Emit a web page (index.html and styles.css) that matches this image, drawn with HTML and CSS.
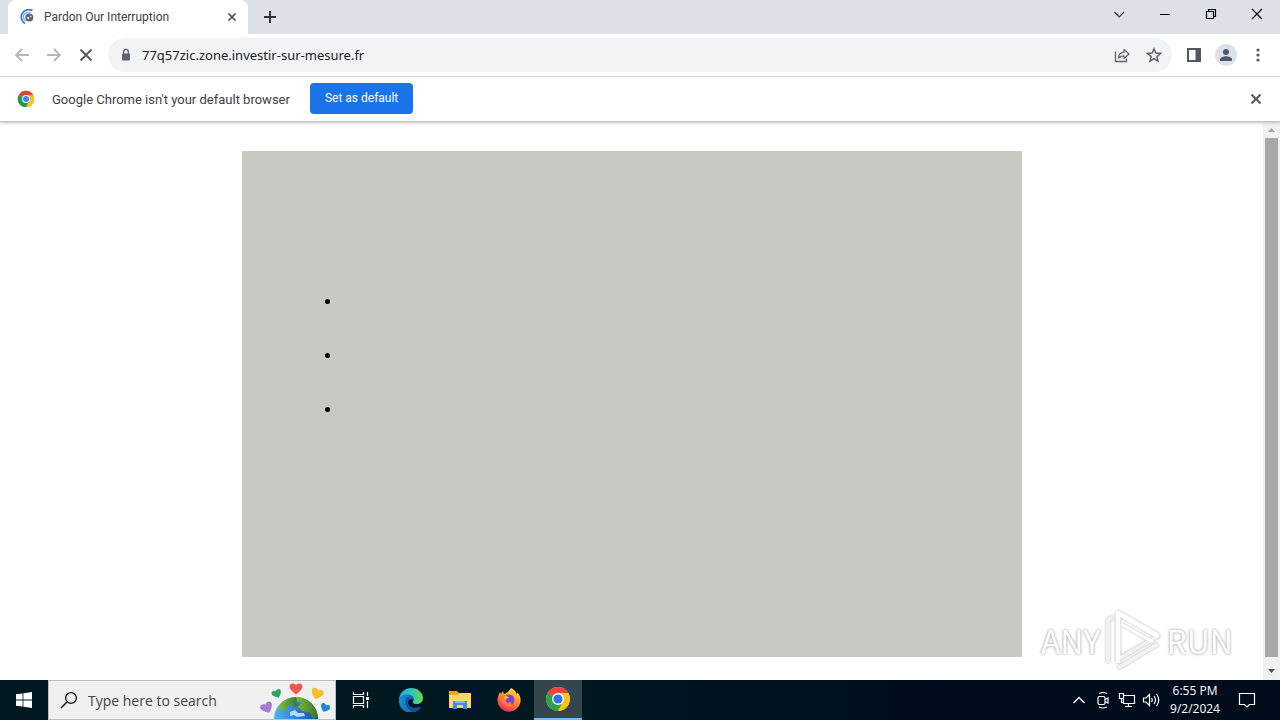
FILE: index.html
```html
<!DOCTYPE html>
<html lang="en">
<head>
	<meta charset="utf-8">
	<title>Pardon Our Interruption</title>
	<link rel="stylesheet" href="styles.css">
</head>
<body>
	<header class="tabstrip">
		<div class="tab">
			<svg width="16" height="16" viewBox="0 0 16 16">
				<path d="M12.500 1.600A7 7 0 1 0 5 14.500" fill="none" stroke="#3b78d8" stroke-width="1.700"/>
				<path d="M10.500 4A4.600 4.600 0 1 0 6 12" fill="none" stroke="#7fa9e6" stroke-width="1.200"/>
				<circle cx="9.300" cy="8.400" r="4" fill="#5f6368"/>
				<path d="M6.500 9l2-1.500 1 1.500-1 1.500zM9.500 6.500l2.500.5-1 1.500z" fill="#dfe3e8"/>
			</svg>
			<span class="tab-title">Pardon Our Interruption</span>
			<button class="icon-btn" aria-label="Close tab">
				<svg width="16" height="16" viewBox="0 0 16 16"><path d="M4.500 4.500l7 7M11.500 4.500l-7 7" stroke="#45494d" stroke-width="1.700"/></svg>
			</button>
		</div>
		<button class="icon-btn new-tab" aria-label="New tab">
			<svg width="16" height="16" viewBox="0 0 16 16"><path d="M8 2v12M2 8h12" stroke="#303438" stroke-width="2"/></svg>
		</button>
		<div class="window-buttons">
			<button class="icon-btn" aria-label="Search tabs">
				<svg width="16" height="16" viewBox="0 0 16 16"><path d="M3.500 6l4.800 5 4.700-5" fill="none" stroke="#333" stroke-width="1.200"/></svg>
			</button>
			<button class="icon-btn" aria-label="Minimize">
				<svg width="16" height="16" viewBox="0 0 16 16"><path d="M3 8.500h10" stroke="#000"/></svg>
			</button>
			<button class="icon-btn" aria-label="Restore">
				<svg width="16" height="16" viewBox="0 0 16 16"><path d="M3.500 5.500h7v7h-7zM5.500 5.500v-2h7v7h-2" fill="none" stroke="#000" stroke-width="1.200"/></svg>
			</button>
			<button class="icon-btn" aria-label="Close">
				<svg width="16" height="16" viewBox="0 0 16 16"><path d="M3 3l10 10M13 3L3 13" stroke="#000" stroke-width="1.200"/></svg>
			</button>
		</div>
	</header>

	<nav class="toolbar">
		<button class="icon-btn" aria-label="Back">
			<svg width="16" height="16" viewBox="0 0 16 16"><path d="M15 8H2.500M8 2L2 8l6 6" fill="none" stroke="#b5b7b9" stroke-width="1.800"/></svg>
		</button>
		<button class="icon-btn" aria-label="Forward">
			<svg width="16" height="16" viewBox="0 0 16 16"><path d="M1 8h12.500M8 2l6 6-6 6" fill="none" stroke="#b5b7b9" stroke-width="1.800"/></svg>
		</button>
		<button class="icon-btn" aria-label="Stop">
			<svg width="16" height="16" viewBox="0 0 16 16"><path d="M2.500 2.500l11 11M13.500 2.500l-11 11" stroke="#55595d" stroke-width="1.800"/></svg>
		</button>
		<div class="omnibox">
			<svg width="16" height="16" viewBox="0 0 16 16"><rect x="4" y="6.500" width="8" height="7" rx="1" fill="#5f6368"/><path d="M5.700 7V4.700a2.300 2.300 0 0 1 4.600 0V7" fill="none" stroke="#5f6368" stroke-width="1.400"/></svg>
			<input class="url" type="text" aria-label="Address" value="77q57zic.zone.investir-sur-mesure.fr">
			<button class="icon-btn" aria-label="Share">
				<svg width="16" height="16" viewBox="0 0 16 16"><path d="M1.500 4.500v10h11v-3" fill="none" stroke="#5f6368" stroke-width="1.300"/><path d="M4.500 11c.3-3.500 2-5.500 5.500-5.800V2.500L15 7l-5 4.500V8.800C7.500 8.800 6 9.500 4.500 11z" fill="none" stroke="#5f6368" stroke-width="1.200" stroke-linejoin="round"/></svg>
			</button>
			<button class="icon-btn" aria-label="Bookmark this tab">
				<svg width="16" height="16" viewBox="0 0 16 16"><path d="M8 1.800l1.800 4.300 4.700.4-3.600 3.100 1.100 4.600L8 11.700l-4 2.500 1.100-4.600-3.600-3.100 4.700-.4z" fill="none" stroke="#5f6368" stroke-width="1.500"/></svg>
			</button>
		</div>
		<div class="toolbar-end">
			<button class="icon-btn" aria-label="Side panel">
				<svg width="16" height="16" viewBox="0 0 16 16"><path d="M2 2h12v12H2z" fill="none" stroke="#55595d" stroke-width="2"/><path d="M9.500 2H14v12H9.500z" fill="#55595d"/></svg>
			</button>
			<button class="icon-btn" aria-label="Profile">
				<svg width="22" height="22" viewBox="0 0 22 22"><circle cx="11" cy="11" r="11" fill="#dee1e8"/><circle cx="11" cy="8" r="3" fill="#4f5870"/><path d="M5 17v-1.700c0-2 4-3 6-3s6 1 6 3V17z" fill="#4f5870"/></svg>
			</button>
			<button class="icon-btn" aria-label="Menu">
				<svg width="16" height="16" viewBox="0 0 16 16" fill="#55595d"><circle cx="8" cy="3" r="1.600"/><circle cx="8" cy="8" r="1.600"/><circle cx="8" cy="13" r="1.600"/></svg>
			</button>
		</div>
	</nav>

	<div class="infobar">
		<svg width="18" height="18" viewBox="0 0 48 48">
			<circle cx="24" cy="24" r="22" fill="#fbc116"/>
			<path d="M24 24L4.900 13A22 22 0 0 1 43.100 13z" fill="#db4437"/>
			<path d="M24 24L4.900 13A22 22 0 0 0 24 46l9.500-16.500z" fill="#1e9b57"/>
			<path d="M24 14h19.600A22 22 0 0 1 24 46l9-17z" fill="#fbc116"/>
			<circle cx="24" cy="24" r="10.500" fill="#fff"/><circle cx="24" cy="24" r="8" fill="#4285f4"/>
		</svg>
		<span class="infobar-text">Google Chrome isn't your default browser</span>
		<button class="default-btn">Set as default</button>
		<button class="icon-btn infobar-close" aria-label="Dismiss">
			<svg width="16" height="16" viewBox="0 0 16 16"><path d="M3.500 3.500l9 9M12.500 3.500l-9 9" stroke="#55595d" stroke-width="2"/></svg>
		</button>
	</div>

	<div class="viewport">
		<main class="page">
			<div class="panel">
				<ul class="list">
					<li></li>
					<li></li>
					<li></li>
				</ul>
			</div>
		</main>
		<div class="scrollbar">
			<svg width="17" height="16" viewBox="0 0 17 16"><path d="M5 10l3.500-4 3.500 4z" fill="#a3a3a3"/></svg>
			<div class="thumb"></div>
			<svg width="17" height="23" viewBox="0 0 17 23"><path d="M5 12l3.500 4 3.500-4z" fill="#505050"/></svg>
		</div>
		<div class="watermark">
			<span>ANY</span>
			<svg class="play" width="58" height="64" viewBox="0 0 58 64" fill="none" stroke-linejoin="round">
				<path d="M14 5l40 23-38 22" stroke="#f0f0f0" stroke-width="4"/>
				<path d="M9 9L4 12v43M14 60l40-24" stroke="#f2f2f2" stroke-width="4"/>
				<path d="M14 55V5l40 23" stroke="#fff" stroke-width="5"/>
				<path d="M17 16l32 18" stroke="#fff" stroke-width="3"/>
			</svg>
			<span>RUN</span>
		</div>
	</div>

	<footer class="taskbar">
		<button class="task" aria-label="Start">
			<svg width="16" height="16" viewBox="0 0 16 16" fill="#fff"><path d="M0 2.300l6.600-.9v6.200H0zM7.400 1.300L16 0v7.600H7.400zM0 8.400h6.600v6.200L0 13.700zM7.400 8.400H16V16l-8.600-1.200z"/></svg>
		</button>
		<div class="search">
			<svg width="18" height="18" viewBox="0 0 18 18"><circle cx="11" cy="7" r="5.400" fill="none" stroke="#111" stroke-width="1.300"/><path d="M7 11l-6 6" stroke="#111" stroke-width="1.400"/></svg>
			<input class="search-input" type="text" aria-label="Search" placeholder="Type here to search">
			<svg width="70" height="38" viewBox="0 0 70 38">
				<defs>
					<linearGradient id="sea" x1="0" x2="1"><stop offset="0" stop-color="#4fb4f8"/><stop offset="1" stop-color="#164ba0"/></linearGradient>
					<linearGradient id="land" x1="0" x2="1"><stop offset="0" stop-color="#83bd37"/><stop offset="1" stop-color="#32752b"/></linearGradient>
					<clipPath id="ball"><circle cx="36" cy="38" r="22"/></clipPath>
					<path id="heart" d="M0 5.500C-4 2.500-6.500 0-6.500-2.500-6.500-6-2-6.500 0-4 2-6.500 6.500-6 6.500-2.500 6.500 0 4 2.500 0 5.500z"/>
				</defs>
				<circle cx="36" cy="38" r="22" fill="url(#sea)"/>
				<g clip-path="url(#ball)" fill="url(#land)">
					<path d="M19 25c4-6 10-9 17-9l3 3-4 2 3 4-4 1-4-3-3 3-2 4-5-1z"/>
					<path d="M36 16c12 0 21 8 22 19l-5 3-3-6-8-2-4-4 3-4-4-2z"/>
				</g>
				<path d="M30 31l5-2 3 3 6 0 1 3-8 1-3-2-4 1z" fill="#a9def5"/>
				<use href="#heart" transform="translate(36 8)" fill="#ed5950"/>
				<use href="#heart" transform="translate(17 13) rotate(-25) scale(.75)" fill="#26a75a"/>
				<use href="#heart" transform="translate(57 13) rotate(20) scale(.95)" fill="#f8bd27"/>
				<use href="#heart" transform="translate(7 27) rotate(-25) scale(.95)" fill="#a87bd0"/>
				<use href="#heart" transform="translate(65 27) rotate(25) scale(.75)" fill="#238bd3"/>
			</svg>
		</div>
		<div class="pinned">
			<button class="task task-view" aria-label="Task view">
				<svg width="18" height="18" viewBox="0 0 18 18" fill="none" stroke="#fff" stroke-width="1.200"><path d="M1.500 5.500h10v7h-10zM1.500 1v2.500h10V1M1.500 17v-2.500h10V17M15.500 1v4M15.500 10v7"/><path d="M14 6h3v3h-3z" fill="#fff" stroke="none"/></svg>
			</button>
			<button class="task" aria-label="Microsoft Edge">
				<svg width="24" height="24" viewBox="0 0 24 24">
					<defs>
						<linearGradient id="edgeTop" x1="0" x2="1"><stop offset="0" stop-color="#27a7e5"/><stop offset=".5" stop-color="#2fc6bd"/><stop offset="1" stop-color="#66d94b"/></linearGradient>
						<linearGradient id="edgeLow" x1="0" x2="1"><stop offset="0" stop-color="#168fd9"/><stop offset="1" stop-color="#115097"/></linearGradient>
					</defs>
					<path d="M0 12A12 12 0 0 1 12 0c7 0 12 5 12 10 0 4-3 6-6.500 6-3 0-4.500-1-3.500-2.500C16 10.500 13 7 8.500 7 4 7 1 9.500 0 12z" fill="url(#edgeTop)"/>
					<path d="M0 12C1 8.500 4.500 6.500 8.500 6.500c4.500 0 7 3 6 6-1-2-5-2-6 1-1 4 5 8 12 5.500l1.500.5A12 12 0 0 1 0 12z" fill="url(#edgeLow)"/>
					<path d="M8.500 9C5 12 6 20 13 23.900c4 .3 7-1.900 9-4.900-5 2.500-11 1-12.500-3-1-3 1-4.500 2.500-5z" fill="#134f97"/>
				</svg>
			</button>
			<button class="task" aria-label="File Explorer">
				<svg width="22" height="20" viewBox="0 0 22 20"><path d="M0 1h8l2 2h12v15H0z" fill="#e9a52c"/><path d="M0 5h9l2-2h11v15H0z" fill="#ffd667"/><path d="M4 11h14v8h-4v-4H8v4H4z" fill="#3592d5"/><path d="M6 11h10v2H6z" fill="#74c1ee"/></svg>
			</button>
			<button class="task" aria-label="Firefox">
				<svg width="24" height="24" viewBox="0 0 24 24">
					<defs><linearGradient id="fox" x1=".8" y1="0" x2=".3" y2="1"><stop offset="0" stop-color="#ffe63b"/><stop offset=".45" stop-color="#ff922e"/><stop offset="1" stop-color="#f42263"/></linearGradient></defs>
					<path d="M14 0c4 2 5 4 5.500 6l1-1.500C23 7 24 10 23.500 14A11.600 11.600 0 0 1 .5 13C.3 9 2 6 3 4l1 2 2-3 1 3c3-1 5-3 7-6z" fill="url(#fox)"/>
					<circle cx="12" cy="12" r="5.500" fill="#7846d3"/><path d="M4 8c3-1 5 0 8 1l-3 2c-1 3 2 5 5 3l1 4c-5 2-10-1-11-6z" fill="#ff7a32"/><path d="M8 8l4 1-3 2-2 1z" fill="#ffc13c"/>
				</svg>
			</button>
			<button class="task active" aria-label="Google Chrome">
				<svg width="26" height="26" viewBox="0 0 48 48">
					<circle cx="24" cy="24" r="22" fill="#fbc116"/>
					<path d="M24 24L4.900 13A22 22 0 0 1 43.100 13z" fill="#e84536"/>
					<path d="M24 24L4.900 13A22 22 0 0 0 24 46l9.500-16.500z" fill="#2aa34a"/>
					<path d="M24 13h19.100A22 22 0 0 1 24 46l9-17z" fill="#fbc116"/>
					<circle cx="24" cy="24" r="11" fill="#fff"/><circle cx="24" cy="24" r="8.500" fill="#2f75e8"/>
				</svg>
			</button>
		</div>
		<div class="tray">
			<svg width="18" height="18" viewBox="0 0 18 18"><path d="M3.500 12L9 6.500l5.500 5.500" fill="none" stroke="#fff" stroke-width="1.300"/></svg>
			<svg width="18" height="18" viewBox="0 0 18 18" fill="none" stroke="#fff" stroke-width="1.200"><rect x="4" y="5.500" width="7" height="8" rx="1.500"/><path d="M11 8.500l3-1.500v5l-3-1.500M5 2.500q4-2 8 0M5 16q4 2 8 0"/></svg>
			<svg width="18" height="18" viewBox="0 0 18 18" fill="none" stroke="#fff" stroke-width="1.200"><path d="M6 4.500h10.500v8H5.500V8M10.500 12.500v3M7 15.500h7M1.500 2.500h4v5h-4zM3.500 7.500v4H5"/></svg>
			<svg width="18" height="18" viewBox="0 0 18 18" fill="none" stroke="#fff" stroke-width="1.200"><path d="M1.500 7v4h2.500l3.500 3.500v-11L4 7zM9.500 7q1.500 2 0 4M12 5q3 4 0 8M14.500 3q4.500 6 0 12"/></svg>
			<div class="clock"><span>6:55 PM</span><span>9/2/2024</span></div>
			<svg class="notify" width="18" height="18" viewBox="0 0 18 18"><path d="M1.500 2.500h15v11h-5L9 16l-2.500-2.500h-5z" fill="none" stroke="#fff" stroke-width="1.200"/></svg>
		</div>
	</footer>
</body>
</html>
```
FILE: styles.css
```css
*{
  box-sizing:border-box;
}
body{
  margin:0;
  height:100vh;
  display:flex;
  flex-direction:column;
  background-color:white;
  font-family:Roboto, "Noto Sans", sans-serif;
  font-size:12px;
  color:#3c4043;
}
svg{
  display:block;
  flex:none;
}
button, input{
  font-family:inherit;
  border:0;
  padding:0;
  background:none;
}
input{
  outline:none;
}
.icon-btn{
  display:flex;
  flex:none;
}
.tabstrip{
  display:flex;
  align-items:center;
  height:34px;
  padding-left:8px;
  background-color:#dee1e8;
}
.tab{
  display:flex;
  align-items:center;
  gap:8px;
  width:240px;
  height:34px;
  padding:0 8px 0 12px;
  border-radius:8px 8px 0 0;
  background-color:white;
}
.tab-title{
  flex:1;
  white-space:nowrap;
}
.new-tab{
  margin-left:14px;
}
.window-buttons{
  display:flex;
  gap:30px;
  margin-left:auto;
  padding:0 15px 6px 0;
}
.toolbar{
  display:flex;
  align-items:center;
  gap:16px;
  height:43px;
  padding:0 14px;
  border-bottom:1px solid #dadce0;
}
.omnibox{
  flex:1;
  display:flex;
  align-items:center;
  gap:16px;
  height:34px;
  margin:0 -2px;
  padding:0 10px;
  border-radius:17px;
  background-color:#f1f3f4;
}
.url{
  flex:1;
  margin-left:-8px;
  font-family:"Noto Sans", sans-serif;
  font-size:13px;
  color:#202124;
}
.toolbar-end{
  display:flex;
  align-items:center;
  gap:13px;
}
.infobar{
  display:flex;
  align-items:center;
  height:45px;
  padding:0 16px 0 17px;
  border-bottom:1px solid #c4c4c4;
  box-shadow:0 1px 3px #c4c4c4;
  z-index:1;
}
.infobar-text{
  margin:0 20px 0 17px;
  font-size:13px;
}
.default-btn{
  height:31px;
  padding:0 15px;
  margin-bottom:2px;
  border-radius:4px;
  background-color:#1a73e8;
  color:white;
  font-size:12px;
}
.infobar-close{
  margin-left:auto;
}
.viewport{
  position:relative;
  flex:1;
  display:flex;
  min-height:0;
}
.page{
  flex:1;
  display:flex;
  justify-content:center;
  padding:29px 0 23px;
}
.panel{
  width:780px;
  background-color:#c5cac3;
}
.list{
  margin:0;
  padding:141px 0 0 99px;
  font-family:"Liberation Sans", sans-serif;
  font-size:16px;
  line-height:18px;
  color:black;
}
.list li{
  margin-bottom:36px;
}
.scrollbar{
  display:flex;
  flex-direction:column;
  width:17px;
  background-color:#f1f1f1;
}
.thumb{
  flex:1;
  margin:0 2px;
  background-color:#a8a8a8;
}
.watermark{
  position:absolute;
  right:47px;
  bottom:8px;
  display:flex;
  align-items:center;
  gap:4px;
  font-family:"Noto Sans CJK JP", sans-serif;
  font-size:32px;
  line-height:60px;
  color:white;
  text-shadow:0 0 3px #aaa, 0 0 2px #bbb;
}
.play{
  filter:drop-shadow(0 0 1px #aaa);
}
.taskbar{
  display:flex;
  height:40px;
  background:linear-gradient(90deg, #001820, #001820 45%, #000b1c 75%);
  color:white;
  font-family:"Open Sans", "Noto Sans", sans-serif;
}
.task{
  display:flex;
  align-items:center;
  justify-content:center;
  width:48px;
}
.task-view{
  width:50px;
}
.pinned{
  display:flex;
  gap:1px;
}
.active{
  background-color:#33464d;
  border-bottom:2px solid #76b9ed;
}
.search{
  display:flex;
  align-items:center;
  gap:10px;
  width:288px;
  padding:0 5px 0 11px;
  border:1px solid #bcc0c2;
  background-color:#f0f0f0;
}
.search-input{
  flex:1;
  min-width:0;
  font-size:14px;
}
.search-input::placeholder{
  color:#444;
  opacity:1;
}
.tray{
  display:flex;
  align-items:center;
  gap:6px;
  margin-left:auto;
  padding-right:24px;
}
.clock{
  display:flex;
  flex-direction:column;
  align-items:center;
  width:58px;
  line-height:18px;
}
.notify{
  margin-left:8px;
}
```
